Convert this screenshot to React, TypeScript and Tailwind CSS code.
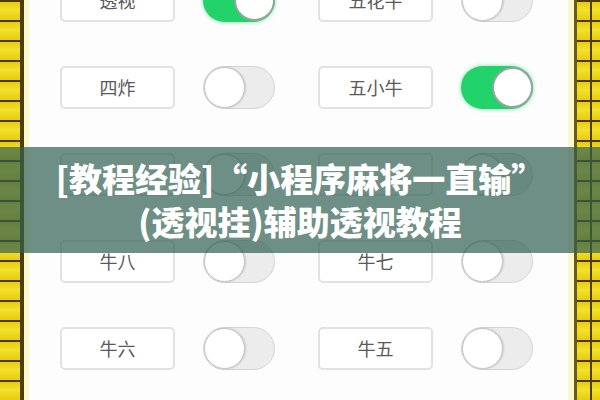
import React from "react";

type Item = { label: string; on: boolean };

const rows: Item[][] = [
  [
    { label: "透视", on: true },
    { label: "五花牛", on: false },
  ],
  [
    { label: "四炸", on: false },
    { label: "五小牛", on: true },
  ],
  [
    { label: "", on: false },
    { label: "", on: false },
  ],
  [
    { label: "牛八", on: false },
    { label: "牛七", on: false },
  ],
  [
    { label: "牛六", on: false },
    { label: "牛五", on: false },
  ],
];

function Toggle({ on }: { on: boolean }) {
  if (on) {
    return (
      <div className="flex h-[43px] w-[72px] items-center justify-end rounded-full bg-[#22d26a] shadow-[0_0_4px_rgba(34,210,106,0.6)]">
        <div className="h-[41px] w-[41px] rounded-full border-2 border-[#9aa39e] bg-white" />
      </div>
    );
  }
  return (
    <div className="flex h-[43px] w-[72px] items-center justify-start rounded-full border border-[#d4d4d4] bg-[#ececec]">
      <div className="h-[41px] w-[41px] rounded-full border border-[#c4c4c4] bg-white shadow-[1px_0_2px_rgba(0,0,0,0.15)]" />
    </div>
  );
}

function Cell({ item }: { item: Item }) {
  return (
    <div className="flex items-center gap-[28px]">
      <div className="flex h-[43px] w-[115px] items-center justify-center rounded-[5px] border-2 border-[#e2e2e2] bg-white text-[18px] text-[#5a5a5a]">
        {item.label}
      </div>
      <Toggle on={item.on} />
    </div>
  );
}

const cells =
  "bg-[repeating-linear-gradient(to_bottom,#4a3806_0px,#4a3806_2px,#e6cc12_2px,#f3e12a_10px,#e6cc12_20px)]";

export default function App() {
  return (
    <div
      className="relative flex h-[400px] w-[600px] overflow-hidden bg-white"
      style={{ fontFamily: '"Noto Sans CJK SC", "Noto Sans", sans-serif' }}
    >
      {/* left tiled edge */}
      <div className={`w-[20px] ${cells}`} />
      <div className="w-[4px] bg-[#4d3d08]" />
      <div className="w-[5px] bg-[#fbf8cc]" />

      {/* settings list */}
      <div className="flex flex-1 flex-col gap-[44px] bg-[#fdfdfd] pl-[31px]">
        {rows.map((row, i) => (
          <div key={i} className={`flex gap-[43px] ${i === 0 ? "mt-[-21px]" : ""}`}>
            {row.map((item, j) => (
              <Cell key={j} item={item} />
            ))}
          </div>
        ))}
      </div>

      {/* right tiled edge */}
      <div className="w-[6px] bg-[#fbf8cc]" />
      <div className="w-[3px] bg-[#6b5a10]" />
      <div className={`w-[13px] ${cells}`} />
      <div className="w-[2px] bg-[#4d3d08]" />
      <div className={`w-[8px] ${cells}`} />

      {/* title banner */}
      <div className="absolute left-0 right-0 top-[147px] flex h-[106px] flex-col items-center justify-center bg-[rgba(48,95,82,0.7)] text-[33px] font-black leading-[43px] text-white">
        <div>[教程经验]“小程序麻将一直输”</div>
        <div>(透视挂)辅助透视教程</div>
      </div>
    </div>
  );
}
